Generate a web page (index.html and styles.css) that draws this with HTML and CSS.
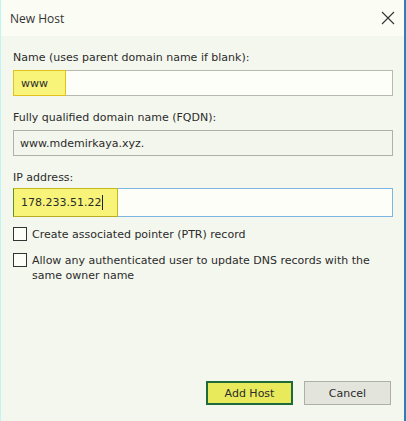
FILE: index.html
```html
<!DOCTYPE html>
<html lang="en">
<head>
    <meta charset="UTF-8">
    <title>New Host</title>
    <link rel="stylesheet" href="styles.css">
</head>
<body>

<div class="dialog">
    <div class="titlebar">
        <span class="title">New Host</span>
        <svg class="close" width="14" height="14" viewBox="0 0 14 14">
            <path d="M1 1 L13 13 M13 1 L1 13" stroke="#333" stroke-width="1.1" fill="none"/>
        </svg>
    </div>

    <div class="content">
        <label class="label">Name (uses parent domain name if blank):</label>
        <div class="field">
            <span class="mark mark-name">www</span>
        </div>

        <label class="label">Fully qualified domain name (FQDN):</label>
        <div class="field readonly">
            <span class="value">www.mdemirkaya.xyz.</span>
        </div>

        <label class="label label-ip">IP address:</label>
        <div class="field focused">
            <span class="mark mark-ip">178.233.51.22<span class="caret"></span></span>
        </div>

        <div class="check">
            <span class="box"></span>
            <span class="check-text">Create associated pointer (PTR) record</span>
        </div>
        <div class="check">
            <span class="box"></span>
            <span class="check-text">Allow any authenticated user to update DNS records with the same owner name</span>
        </div>
    </div>

    <div class="buttons">
        <button class="button add-btn">Add Host</button>
        <button class="button cancel-btn">Cancel</button>
    </div>
</div>

</body>
</html>
```

FILE: styles.css
```css
/* dialog window */
body {
    margin: 0;
    padding: 0;
    font-family: "DejaVu Sans", sans-serif;
    font-size: 11px;
    color: #2b2b2b;
}
.dialog {
    width: 406px;
    height: 421px;
    box-sizing: border-box;
    background-color: #f4f7ee;
    border-left: 1px solid #bff5f3;
    border-right: 2px solid #2c7fb8;
    display: flex;
    flex-direction: column;
}
.titlebar {
    height: 36px;
    background-color: #fbfcf3;
    display: flex;
    align-items: center;
    justify-content: space-between;
    padding: 0 9px 0 9px;
    flex-shrink: 0;
}
.title {
    font-family: "Open Sans", sans-serif;
    font-size: 12px;
    color: #333;
}
.close {
    display: block;
}

/* form */
.content {
    padding: 15px 11px 0 12px;
    display: flex;
    flex-direction: column;
}
.label {
    display: block;
    line-height: 14px;
    margin-bottom: 5px;
}
.label-ip {
    margin-bottom: 3px;
}
.field {
    height: 26px;
    box-sizing: border-box;
    border: 1px solid #b9b9b4;
    background-color: #fdfef8;
    display: flex;
    align-items: center;
    margin-bottom: 15px;
}
.field.readonly {
    background-color: #f3f6ed;
    border-color: #aeb0aa;
}
.field.focused {
    height: 29px;
    border-color: #7cb6e2;
    margin-bottom: 10px;
}
.value {
    padding-left: 6px;
}
.mark {
    align-self: stretch;
    display: flex;
    align-items: center;
    margin: -1px 0 -1px -1px;
    box-sizing: border-box;
    background-color: #f8f47a;
    border: 1px solid #e3c21f;
}
.mark-name {
    width: 53px;
    padding-left: 7px;
}
.mark-ip {
    width: 105px;
    padding-left: 7px;
    border-color: #c5b81f;
    border-left-color: #5c8f2c;
    border-bottom-color: #b8ad1c;
}
.caret {
    display: inline-block;
    width: 1px;
    height: 15px;
    background-color: #222;
    margin-left: 1px;
}
.check {
    display: flex;
    align-items: flex-start;
    margin-bottom: 11px;
}
.box {
    width: 14px;
    height: 14px;
    box-sizing: border-box;
    border: 1px solid #333;
    background-color: #fdfef8;
    flex-shrink: 0;
    margin-right: 5px;
}
.check-text {
    line-height: 15px;
}

/* buttons */
.buttons {
    margin-top: auto;
    display: flex;
    justify-content: flex-end;
    gap: 11px;
    padding: 0 13px 16px 0;
}
.button {
    width: 87px;
    height: 24px;
    font-family: "DejaVu Sans", sans-serif;
    font-size: 11px;
    color: #2b2b2b;
    box-sizing: border-box;
    padding: 0;
}
.add-btn {
    background-color: #e8ea5c;
    border: 2px solid #1f6a3a;
}
.cancel-btn {
    background-color: #e3e5dd;
    border: 1px solid #adb0a8;
}
```
